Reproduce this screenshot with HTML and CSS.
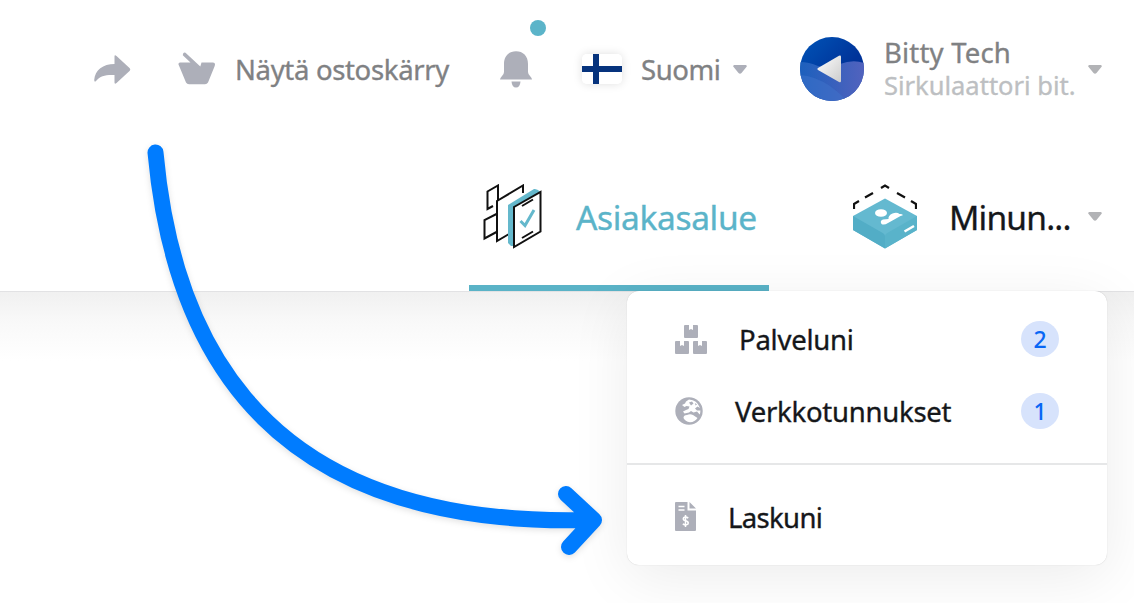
FILE: index.html
```html
<!DOCTYPE html>
<html lang="fi">
<head>
<meta charset="utf-8">
<title>Asiakasalue</title>
<link rel="stylesheet" href="styles.css">
</head>
<body>
<header class="header">
  <div class="topbar">
    <svg class="share" width="38" height="30" viewBox="0 0 38 30"><path d="M21.500 1.500Q21.500-.5 23.500 1L36.500 13Q38 14.500 36.500 16L23.500 28Q21.500 29.500 21.500 27.500V20C13 19.500 7 21 3.500 25.500Q1.500 28 1.200 25C2 15 10 9 21.500 9Z"/></svg>
    <svg class="cart" width="38" height="33" viewBox="0 0 38 33"><path d="M7.500.7Q5.500-.2 5 2L4.800 3.200L12.500 10.500H2Q.3 10.500.5 12.500L2 16L8 30.500Q9 32.300 11 32.300H27Q29 32.300 30 30.500L36.500 14.500Q38 10.500 35 10.500H23.500L22.300 14.500Z"/></svg>
    <span class="label cart-label">Näytä ostoskärry</span>
    <span class="bell-wrap">
      <svg class="bell" width="32" height="37" viewBox="0 0 32 37"><path d="M4 13C4 5 9 .3 16 .3S28 5 28 13V21Q28 23 30 25Q32 27 32 28.500H0Q0 27 2 25Q4 23 4 21ZM11.500 30.500H20.500Q20 36.500 16 36.500T11.500 30.500Z"/></svg>
      <span class="dot"></span>
    </span>
    <svg class="flag" width="40" height="30" viewBox="0 0 40 30"><path fill="#fff" d="M0 0H40V30H0Z"/><path fill="#06337d" d="M11 0H17V12H40V18H17V30H11V18H0V12H11Z"/></svg>
    <span class="label lang-label">Suomi</span>
    <svg class="caret" width="14" height="9" viewBox="0 0 14 9"><path d="M1.200 0H12.800Q14.500.5 13.400 2L8.500 8Q7 9.300 5.500 8L.6 2Q-.5.5 1.200 0Z"/></svg>
    <svg class="avatar" width="64" height="64" viewBox="0 0 64 64">
      <defs>
        <linearGradient id="sky" x1="0" y1="0" x2="1" y2="1"><stop offset="0" stop-color="#0055b8"/><stop offset=".6" stop-color="#003399"/><stop offset="1" stop-color="#002f98"/></linearGradient>
        <linearGradient id="wave" x1="0" y1="0" x2="1" y2="0"><stop offset="0" stop-color="#1f63bf"/><stop offset="1" stop-color="#5b68c2"/></linearGradient>
        <linearGradient id="tri" x1="0" y1="0" x2="1" y2="1"><stop offset="0" stop-color="#fff"/><stop offset="1" stop-color="#ccc"/></linearGradient>
        <clipPath id="disc"><circle cx="32" cy="32" r="32"/></clipPath>
      </defs>
      <g clip-path="url(#disc)"><path fill="url(#sky)" d="M0 0H64V64H0Z"/><path fill="url(#wave)" opacity=".9" d="M0 25Q9 25 18 29Q28 32 40 27Q53 22 64 26V64H0Z"/><path fill="#3f74cc" opacity=".5" d="M0 38Q15 39 30 49Q40 56 47 64H0Z"/></g>
      <path fill="url(#tri)" d="M18 31L39 18.800Q41 18 41 20V44Q41 46 39 45L18 33Q16.500 32 18 31Z"/>
    </svg>
    <div class="account">
      <span class="account-name">Bitty Tech</span>
      <span class="account-org">Sirkulaattori bit.</span>
    </div>
    <svg class="caret" width="14" height="9" viewBox="0 0 14 9"><path d="M1.200 0H12.800Q14.500.5 13.400 2L8.500 8Q7 9.300 5.500 8L.6 2Q-.5.5 1.200 0Z"/></svg>
  </div>
  <nav class="nav">
    <a class="tab active">
      <svg class="tab-icon" width="60" height="66" viewBox="0 0 60 66">
        <g fill="none" stroke="#111" stroke-width="2">
          <path d="M10 22L4.500 25V7.500L15 1.500V17"/>
          <path d="M13.500 30L1.500 36V54.500L13.500 48"/>
          <path fill="#fff" d="M40 9V1.500L14 17V57L26 50"/>
        </g>
        <path fill="#64b8cc" d="M25 21L51 5Q54 4.500 57 7.500V46L33 62H28L25 59Z"/>
        <path fill="#fff" stroke="#111" stroke-width="2" d="M31 23L57.500 8V47.500L31 63Z"/>
        <path stroke="#111" stroke-width="2" d="M39 22L50 15.500M39 54L50 47.500"/>
        <path fill="none" stroke="#64b8cc" stroke-width="3" d="M37.500 37L42 41.500L51 26"/>
      </svg>
      <span class="tab-label area-label">Asiakasalue</span>
    </a>
    <a class="tab mine">
      <svg class="tab-icon" width="64" height="66" viewBox="0 0 64 66">
        <path fill="none" stroke="#111" stroke-width="2.200" d="M1 25V20L6 17M12 13.500L20 9M28 4L32 1.500L36 4M44 9L52 13.500M58 17L63 20V25"/>
        <path fill="#64b9d0" d="M0 32L32 14.500L64 32V46L32 64.500L0 46Z"/>
        <path fill="#52adc6" d="M0 32L28 48Q32 50 32 52V64.500L0 46Z"/>
        <path fill="#59b3ca" d="M64 32L36 48Q32 50 32 52V64.500L64 46Z"/>
        <ellipse cx="28" cy="29" rx="6" ry="3.800" fill="#fff"/>
        <path fill="#fff" d="M28.500 40Q26.500 36.500 30 35.500Q33 35 35.500 35Q35 31.500 39.500 29.500Q44 28 46.500 30Q48.500 29.500 50 31Q49.500 31.500 47.500 32L35 39Q31 41.500 28.500 40Z"/>
        <path stroke="#fff" stroke-width="2.500" d="M51.500 47.500L61 42"/>
      </svg>
      <span class="tab-label mine-label">Minun...</span>
      <svg class="caret" width="14" height="9" viewBox="0 0 14 9"><path d="M1.200 0H12.800Q14.500.5 13.400 2L8.500 8Q7 9.300 5.500 8L.6 2Q-.5.5 1.200 0Z"/></svg>
    </a>
  </nav>
</header>
<div class="menu">
  <a class="menu-item">
    <svg class="menu-icon" width="32" height="29" viewBox="0 0 32 29"><path d="M10 0H14V5L16 4L18 5V0H22Q23 0 23 1V12Q23 13 22 13H10Q9 13 9 12V1Q9 0 10 0ZM1 16H5V21L7 20L9 21V16H13Q14 16 14 17V28Q14 29 13 29H1Q0 29 0 28V17Q0 16 1 16ZM19 16H23V21L25 20L27 21V16H31Q32 16 32 17V28Q32 29 31 29H19Q18 29 18 28V17Q18 16 19 16Z"/></svg>
    <span class="menu-label services">Palveluni</span>
    <span class="badge">2</span>
  </a>
  <a class="menu-item">
    <svg class="menu-icon" width="28" height="28" viewBox="0 0 28 28"><circle cx="14" cy="14" r="13.700"/><path fill="#fff" d="M14 2.600Q22 3 25 11L22.500 9.500L20 11.500L22 13.500L25.400 13.500Q25.400 15.500 24.700 17.500L22 14.500L18.500 15.500L16 14L14 15.500L9.500 16.500L8 14.500L11 13L13.500 12L14.500 9.500L11.500 9L9.500 10L7 8L10 6.500L11 4.500ZM8.500 21Q8.500 18 12 18Q15 16.500 18 18L22.500 21Q20 25 15 25.300Q10 24.500 8.500 21Z"/><path d="M14 5.500L17 4.500L18.500 6.500L16 8.500ZM20 6L22 7.500L20.500 8.500Z"/></svg>
    <span class="menu-label domains">Verkkotunnukset</span>
    <span class="badge">1</span>
  </a>
  <a class="menu-item last">
    <svg class="menu-icon" width="22" height="29" viewBox="0 0 22 29"><path d="M1 0H12.500V8.500H21V28Q21 29 20 29H1Q0 29 0 28V1Q0 0 1 0ZM14.500 0L21 6.500H14.500Z"/><path fill="none" stroke="#fff" stroke-width="1.500" d="M3.500 4.500H9.500M3.500 8H9.500M10.500 13V25"/><path fill="none" stroke="#fff" stroke-width="1.600" d="M13.300 16Q10.500 14.500 8.700 15.700Q7.500 17.500 10 18.500Q14 19.500 13 22Q11 23.700 7.800 22"/></svg>
    <span class="menu-label invoices">Laskuni</span>
  </a>
</div>
<svg class="pointer" width="1134" height="603" viewBox="0 0 1134 603"><path d="M155.500 152.500C178 400 315 527 590 520M566 494L594 520L569 547"/></svg>
</body>
</html>
```
FILE: styles.css
```css
* { box-sizing: border-box; }
body {
  position: relative;
  width: 1134px;
  height: 603px;
  margin: 0;
  overflow: hidden;
  background: #fff linear-gradient(#f0f0f0, #f9f9f9 32px, #fff 70px) 0 291px no-repeat;
  font-family: "Noto Sans", sans-serif;
  color: #15171a;
}
svg { display: block; flex: none; }
.header {
  height: 292px;
  background: #fff;
  border-bottom: 1px solid #e2e2e4;
}
.topbar {
  display: flex;
  align-items: center;
  height: 138px;
  padding-left: 93px;
  white-space: nowrap;
}
.share, .cart, .bell, .caret, .menu-icon { fill: #adafb9; }
.share { margin-top: 1px; }
.cart { margin: 0 19px 2px 47px; }
.label, .account-name, .account-org, .tab-label, .menu-label { -webkit-text-stroke: .35px currentColor; }
.label { color: #7f8183; font-size: 27.5px; }
.cart-label { width: 246px; letter-spacing: -.33px; }
.bell-wrap { position: relative; margin-left: 19px; }
.dot {
  position: absolute;
  left: 30px;
  top: -31px;
  width: 16px;
  height: 16px;
  border-radius: 50%;
  background: #5bb4c9;
}
.flag {
  margin: 0 19px 0 50px;
  border-radius: 5px;
  box-shadow: 0 0 10px rgba(0, 0, 0, .13);
}
.lang-label { width: 92px; letter-spacing: -.45px; }
.avatar { margin-left: 53px; }
.account {
  display: flex;
  flex-direction: column;
  width: 204px;
  margin-left: 20px;
}
.account-name, .account-org { line-height: 33px; }
.account-name { color: #7f8183; font-size: 27.5px; letter-spacing: .2px; }
.account-org { color: #bdbfc2; font-size: 25.5px; }
.nav { display: flex; height: 153px; padding-left: 469px; }
.tab {
  display: flex;
  align-items: center;
  height: 153px;
  padding: 10px 0 0 14px;
  white-space: nowrap;
}
.active { width: 300px; border-bottom: 6px solid #5ab3c7; color: #5bb4c9; }
.mine { flex: 1; padding-left: 84px; padding-bottom: 6px; }
.tab-label { font-size: 33.5px; margin-left: 33px; }
.area-label { letter-spacing: -.35px; }
.mine-label { width: 139px; margin-left: 32px; letter-spacing: -.8px; }
.mine .caret, .account + .caret { fill: #b2b3b6; }
.menu {
  position: absolute;
  left: 627px;
  top: 291px;
  width: 480px;
  height: 274px;
  padding-top: 12px;
  border-radius: 12px;
  background: #fff;
  box-shadow: 0 0 1px rgba(0, 0, 0, .22), 0 12px 60px rgba(0, 0, 0, .08);
}
.menu-item {
  display: flex;
  align-items: center;
  height: 72px;
  padding: 0 48px;
}
.menu-label { font-size: 27.5px; letter-spacing: -.25px; }
.services, .domains { margin-left: 32px; }
.badge {
  width: 38px;
  height: 36px;
  margin-left: auto;
  border-radius: 50%;
  background: #d7e3fc;
  color: #0866f5;
  font-size: 23px;
  font-weight: 500;
  line-height: 36px;
  text-align: center;
}
.last {
  height: 107px;
  margin-top: 16px;
  border-top: 2px solid #e6e7e8;
}
.last .menu-icon { margin-bottom: 2px; }
.invoices { margin: 0 0 1px 31px; letter-spacing: -.65px; }
.pointer {
  position: absolute;
  left: 0;
  top: 0;
  fill: none;
  stroke: #007cff;
  stroke-width: 16px;
  stroke-linecap: round;
  stroke-linejoin: round;
  filter: drop-shadow(0 2px 3px rgba(0, 0, 0, .12));
}
```
